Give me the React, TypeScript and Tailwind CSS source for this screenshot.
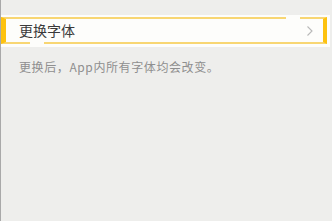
import React from "react";

function Chevron() {
  return (
    <svg width="8" height="12" viewBox="0 0 8 12" className="shrink-0">
      <path d="M1.5 1.5 L6 6 L1.5 10.5" fill="none" stroke="#b8b8b8" strokeWidth="1.1" />
    </svg>
  );
}

export default function App() {
  return (
    <div
      className="w-[332px] h-[221px] bg-[#eeeeec] border-l border-[#a9a9a9] overflow-hidden pt-[15px]"
      style={{ fontFamily: '"Noto Sans CJK SC", "Noto Sans", sans-serif' }}
    >
      {/* selected row */}
      <div className="h-[32px] mr-[2px] bg-[#fdfdfb] pt-[2px] pb-[3px] pr-[3px] flex">
        <div className="relative flex-1 flex items-center border-l-[5px] border-r-[4px] border-y-2 border-l-[#fdc20f] border-r-[#fdc20f] border-y-[#f8d673] pl-[13px] pr-[9px]">
          <div className="absolute left-[280px] w-[14px] -top-[2px] h-[2px] bg-[#fdfdfb]" />
          <div className="absolute left-[24px] w-[14px] -bottom-[2px] h-[2px] bg-[#fdfdfb]" />
          <span className="flex-1 text-[14px] text-[#3a3a3a]">更换字体</span>
          <Chevron />
        </div>
      </div>
      <p className="pl-[18px] pt-[11px] text-[12px] tracking-[0.6px] text-[#8f8f8f]">更换后，App内所有字体均会改变。</p>
    </div>
  );
}
